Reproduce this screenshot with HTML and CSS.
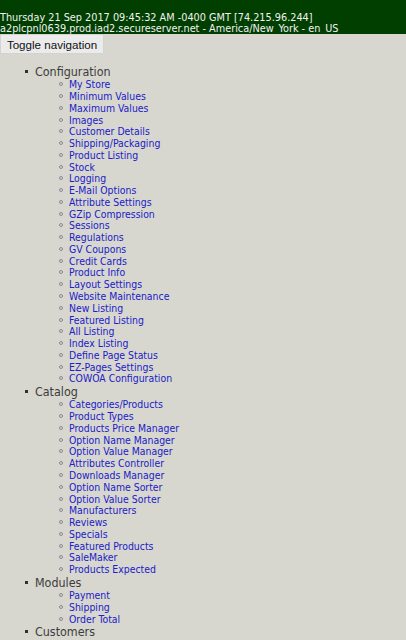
FILE: index.html
```html
<!DOCTYPE html>
<html>
<head>
<meta charset="utf-8">
<link rel="stylesheet" href="styles.css">
</head>
<body>
<div class="header">
  <div class="line">Thursday 21 Sep 2017 09:45:32 AM -0400 GMT [74.215.96.244]</div>
  <div class="line">a2plcpnl0639.prod.iad2.secureserver.net - America/New_York - en_US</div>
</div>
<button class="toggle">Toggle navigation</button>
<ul class="sections">
  <li class="section"><span class="title">Configuration</span>
    <ul class="links">
      <li><a href="#">My Store</a></li>
      <li><a href="#">Minimum Values</a></li>
      <li><a href="#">Maximum Values</a></li>
      <li><a href="#">Images</a></li>
      <li><a href="#">Customer Details</a></li>
      <li><a href="#">Shipping/Packaging</a></li>
      <li><a href="#">Product Listing</a></li>
      <li><a href="#">Stock</a></li>
      <li><a href="#">Logging</a></li>
      <li><a href="#">E-Mail Options</a></li>
      <li><a href="#">Attribute Settings</a></li>
      <li><a href="#">GZip Compression</a></li>
      <li><a href="#">Sessions</a></li>
      <li><a href="#">Regulations</a></li>
      <li><a href="#">GV Coupons</a></li>
      <li><a href="#">Credit Cards</a></li>
      <li><a href="#">Product Info</a></li>
      <li><a href="#">Layout Settings</a></li>
      <li><a href="#">Website Maintenance</a></li>
      <li><a href="#">New Listing</a></li>
      <li><a href="#">Featured Listing</a></li>
      <li><a href="#">All Listing</a></li>
      <li><a href="#">Index Listing</a></li>
      <li><a href="#">Define Page Status</a></li>
      <li><a href="#">EZ-Pages Settings</a></li>
      <li><a href="#">COWOA Configuration</a></li>
    </ul>
  </li>
  <li class="section"><span class="title">Catalog</span>
    <ul class="links">
      <li><a href="#">Categories/Products</a></li>
      <li><a href="#">Product Types</a></li>
      <li><a href="#">Products Price Manager</a></li>
      <li><a href="#">Option Name Manager</a></li>
      <li><a href="#">Option Value Manager</a></li>
      <li><a href="#">Attributes Controller</a></li>
      <li><a href="#">Downloads Manager</a></li>
      <li><a href="#">Option Name Sorter</a></li>
      <li><a href="#">Option Value Sorter</a></li>
      <li><a href="#">Manufacturers</a></li>
      <li><a href="#">Reviews</a></li>
      <li><a href="#">Specials</a></li>
      <li><a href="#">Featured Products</a></li>
      <li><a href="#">SaleMaker</a></li>
      <li><a href="#">Products Expected</a></li>
    </ul>
  </li>
  <li class="section"><span class="title">Modules</span>
    <ul class="links">
      <li><a href="#">Payment</a></li>
      <li><a href="#">Shipping</a></li>
      <li><a href="#">Order Total</a></li>
    </ul>
  </li>
  <li class="section"><span class="title">Customers</span></li>
</ul>
</body>
</html>
```
FILE: styles.css
```css
html, body {
  margin: 0;
  padding: 0;
  background: #d7d7cf;
}
body {
  font-family: "DejaVu Sans Condensed", "DejaVu Sans", sans-serif;
}
.header {
  background: #003f00;
  color: #f2f2f2;
  padding-top: 12px;
  font-size: 10.8px;
  line-height: 11px;
  white-space: nowrap;
  overflow: hidden;
}
.toggle {
  display: block;
  margin: 0;
  height: 20px;
  width: 104px;
  padding: 0;
  border: 1px solid #d3d3d3;
  background: #ebebeb;
  font-family: "Liberation Sans", Arial, sans-serif;
  font-size: 11.6px;
  color: #111;
  text-align: center;
}
.sections {
  list-style: none;
  margin: 11px 0 0 0;
  padding: 0 0 0 25px;
}
.section {
  line-height: 14.24px;
  font-size: 12.4px;
  color: #3c3c3c;
}
.section::before {
  content: "";
  display: inline-block;
  width: 3px;
  height: 3px;
  background: #303030;
  margin-right: 7px;
  vertical-align: 3px;
}
.links {
  list-style: none;
  margin: 0;
  padding: 0 0 0 34px;
}
.links li {
  font-size: 10.4px;
  line-height: 11.76px;
}
.links li::before {
  content: "";
  display: inline-block;
  width: 2px;
  height: 2px;
  border: 1px solid #8a8a98;
  border-radius: 50%;
  margin-right: 6px;
  vertical-align: 2px;
}
.links a {
  color: #2020c8;
  text-decoration: none;
}
```
